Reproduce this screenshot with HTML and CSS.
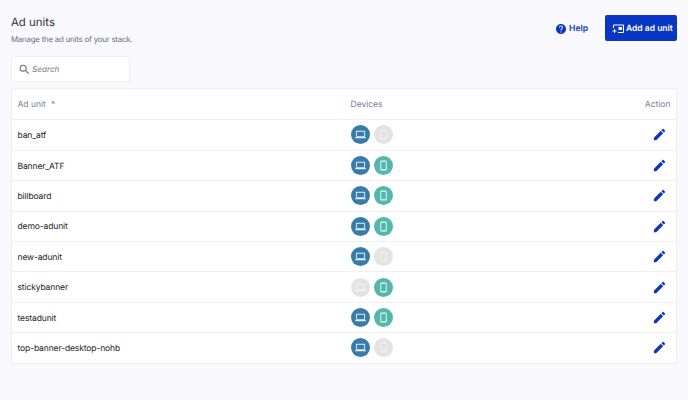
FILE: index.html
```html
<!DOCTYPE html>
<html lang="en">
<head>
<meta charset="utf-8">
<title>Ad units</title>
<link rel="stylesheet" href="styles.css">
</head>
<body>
<svg class="defs" width="0" height="0" aria-hidden="true">
  <symbol id="laptop" viewBox="0 0 24 24"><path fill="currentColor" d="M20 18c1.100 0 2-.9 2-2V6c0-1.100-.9-2-2-2H4c-1.100 0-2 .9-2 2v10c0 1.100.9 2 2 2H0v2h24v-2h-4zM4 6h16v10H4V6z"/></symbol>
  <symbol id="phone" viewBox="0 0 24 24"><path fill="currentColor" d="M16 1H8C6.340 1 5 2.340 5 4v16c0 1.660 1.340 3 3 3h8c1.660 0 3-1.340 3-3V4c0-1.660-1.340-3-3-3zm1 19H7V4h10v16z"/></symbol>
  <symbol id="edit" viewBox="0 0 24 24"><path fill="currentColor" d="M3 17.250V21h3.750L17.810 9.940l-3.750-3.750L3 17.250zM20.710 7.040c.39-.39.39-1.020 0-1.410l-2.340-2.340c-.39-.39-1.020-.39-1.410 0l-1.830 1.830 3.750 3.750 1.830-1.830z"/></symbol>
</svg>
<main class="page">
  <header class="top">
    <div class="heading">
      <h1>Ad units</h1>
      <p>Manage the ad units of your stack.</p>
    </div>
    <div class="actions">
      <a class="help" href="#">
        <svg class="help-icon" viewBox="0 0 24 24"><path fill="currentColor" d="M12 2C6.480 2 2 6.480 2 12s4.480 10 10 10 10-4.480 10-10S17.520 2 12 2zm1 17h-2v-2h2v2zm2.070-7.750l-.9.920C13.450 12.900 13 13.500 13 15h-2v-.5c0-1.100.45-2.100 1.170-2.830l1.240-1.260c.37-.36.59-.86.59-1.410 0-1.100-.9-2-2-2s-2 .9-2 2H8c0-2.210 1.790-4 4-4s4 1.790 4 4c0 .88-.36 1.680-.93 2.250z"/></svg>
        Help
      </a>
      <button class="add" type="button">
        <svg class="add-icon" viewBox="0 0 24 24"><path fill="currentColor" d="M22 3H4a2 2 0 0 0-2 2v5h2V5h18v13H12v2h10a2 2 0 0 0 2-2V5a2 2 0 0 0-2-2z"/><path fill="currentColor" d="M13 8h7v6h-7zM4 12v3H1v2h3v3h2v-3h3v-2H6v-3z"/></svg>
        Add ad unit
      </button>
    </div>
  </header>
  <label class="search">
    <svg class="search-icon" viewBox="0 0 24 24"><path fill="currentColor" d="M15.500 14h-.79l-.28-.27A6.470 6.470 0 0 0 16 9.500 6.500 6.500 0 1 0 9.500 16c1.610 0 3.090-.59 4.230-1.570l.27.28v.79l5 4.990L20.490 19l-4.990-5zm-6 0C7.010 14 5 11.990 5 9.500S7.010 5 9.500 5 14 7.010 14 9.500 11.990 14 9.500 14z"/></svg>
    <input type="text" placeholder="Search">
  </label>
  <section class="table">
    <div class="row head">
      <div class="c-name">Ad unit <span class="sort">^</span></div>
      <div class="c-dev">Devices</div>
      <div class="c-act">Action</div>
    </div>
    <div class="row"><div class="c-name">ban_atf</div><div class="c-dev"><span class="dot on-d"><svg><use href="#laptop"/></svg></span><span class="dot off"><svg><use href="#phone"/></svg></span></div><div class="c-act"><svg class="edit"><use href="#edit"/></svg></div></div>
    <div class="row"><div class="c-name">Banner_ATF</div><div class="c-dev"><span class="dot on-d"><svg><use href="#laptop"/></svg></span><span class="dot on-m"><svg><use href="#phone"/></svg></span></div><div class="c-act"><svg class="edit"><use href="#edit"/></svg></div></div>
    <div class="row"><div class="c-name">billboard</div><div class="c-dev"><span class="dot on-d"><svg><use href="#laptop"/></svg></span><span class="dot on-m"><svg><use href="#phone"/></svg></span></div><div class="c-act"><svg class="edit"><use href="#edit"/></svg></div></div>
    <div class="row"><div class="c-name">demo-adunit</div><div class="c-dev"><span class="dot on-d"><svg><use href="#laptop"/></svg></span><span class="dot on-m"><svg><use href="#phone"/></svg></span></div><div class="c-act"><svg class="edit"><use href="#edit"/></svg></div></div>
    <div class="row"><div class="c-name">new-adunit</div><div class="c-dev"><span class="dot on-d"><svg><use href="#laptop"/></svg></span><span class="dot off"><svg><use href="#phone"/></svg></span></div><div class="c-act"><svg class="edit"><use href="#edit"/></svg></div></div>
    <div class="row"><div class="c-name">stickybanner</div><div class="c-dev"><span class="dot off"><svg><use href="#laptop"/></svg></span><span class="dot on-m"><svg><use href="#phone"/></svg></span></div><div class="c-act"><svg class="edit"><use href="#edit"/></svg></div></div>
    <div class="row"><div class="c-name">testadunit</div><div class="c-dev"><span class="dot on-d"><svg><use href="#laptop"/></svg></span><span class="dot on-m"><svg><use href="#phone"/></svg></span></div><div class="c-act"><svg class="edit"><use href="#edit"/></svg></div></div>
    <div class="row"><div class="c-name">top-banner-desktop-nohb</div><div class="c-dev"><span class="dot on-d"><svg><use href="#laptop"/></svg></span><span class="dot off"><svg><use href="#phone"/></svg></span></div><div class="c-act"><svg class="edit"><use href="#edit"/></svg></div></div>
  </section>
</main>
</body>
</html>
```
FILE: styles.css
```css
* { box-sizing: border-box; }
html, body { margin: 0; height: 100%; }
body {
  background: #f8f8fd;
  font-family: Inter, "Liberation Sans", sans-serif;
  color: #2b2b33;
  overflow: hidden;
  text-rendering: geometricPrecision;
}
.defs { position: absolute; }
.page { padding: 14px 11px 0; }
.top { display: flex; justify-content: space-between; align-items: flex-start; height: 42px; }
h1 { margin: 1px 0 0; font-size: 11.400px; font-weight: 400; line-height: 15px; color: #33333b; }
.heading p { margin: 4px 0 0; font-size: 7.800px; letter-spacing: -.18px; line-height: 11px; color: #6a6d85; }
.actions { display: flex; align-items: center; gap: 17px; margin-top: 1px; }
.help { display: flex; align-items: center; gap: 2px; padding-top: 1px; color: #0a36c4; font-size: 8.500px; font-weight: 600; text-decoration: none; }
.help-icon { width: 12px; height: 12px; }
.add {
  display: flex; align-items: center; gap: 2px; white-space: nowrap;
  width: 72px; height: 26px; padding: 1px 0 0 7px;
  background: #0a36c4; color: #fff; border: 0; border-radius: 2px;
  font: 600 8.500px Inter, sans-serif;
  text-rendering: geometricPrecision;
}
.add-icon { width: 12px; height: 12px; flex: none; }
.search {
  display: flex; align-items: center; gap: 1px;
  width: 119px; height: 26px; padding-left: 6px;
  background: #fff; border: 1px solid #efeff5; border-radius: 2px;
}
.search-icon { width: 13px; height: 13px; color: #6a6d85; flex: none; }
.search input { border: 0; outline: 0; background: none; width: 85px; padding: 0; font: italic 400 8.200px Inter, sans-serif; text-rendering: geometricPrecision; }
.search input::placeholder { color: #787b90; opacity: 1; font-style: italic; }
.table { margin-top: 6px; background: #fff; border: 1px solid #ededf3; border-radius: 2px; width: 666px; }
.row { display: grid; grid-template-columns: 333px 1fr 80px; align-items: center; height: 30.400px; padding: 0 5.500px; border-top: 1px solid #efeff4; font-size: 8.500px; letter-spacing: -.12px; color: #202026; }
.row.head { height: 30.500px; border-bottom: 1px solid #efeff4; border-top: 0; color: #7a7d96; letter-spacing: 0; }
.row.head + .row { border-top: 0; }
.c-name { padding-top: 2px; }
.head .c-dev, .head .c-act { padding-top: 2px; }
.sort { margin-left: 3px; font-size: 8px; color: #55586e; }
.c-dev { display: flex; gap: 4px; }
.c-act { display: flex; justify-content: flex-end; }
.dot { width: 19px; height: 19px; border-radius: 50%; display: flex; align-items: center; justify-content: center; }
.dot svg { width: 11px; height: 11px; }
.on-d { background: #377bab; color: #e8eef8; }
.on-m { background: #53b8ac; color: #eef8f6; }
.off { background: #e3e3e3; color: #f2f2f2; }
.edit { width: 15px; height: 15px; color: #0a36c4; margin-right: 4px; }
```
